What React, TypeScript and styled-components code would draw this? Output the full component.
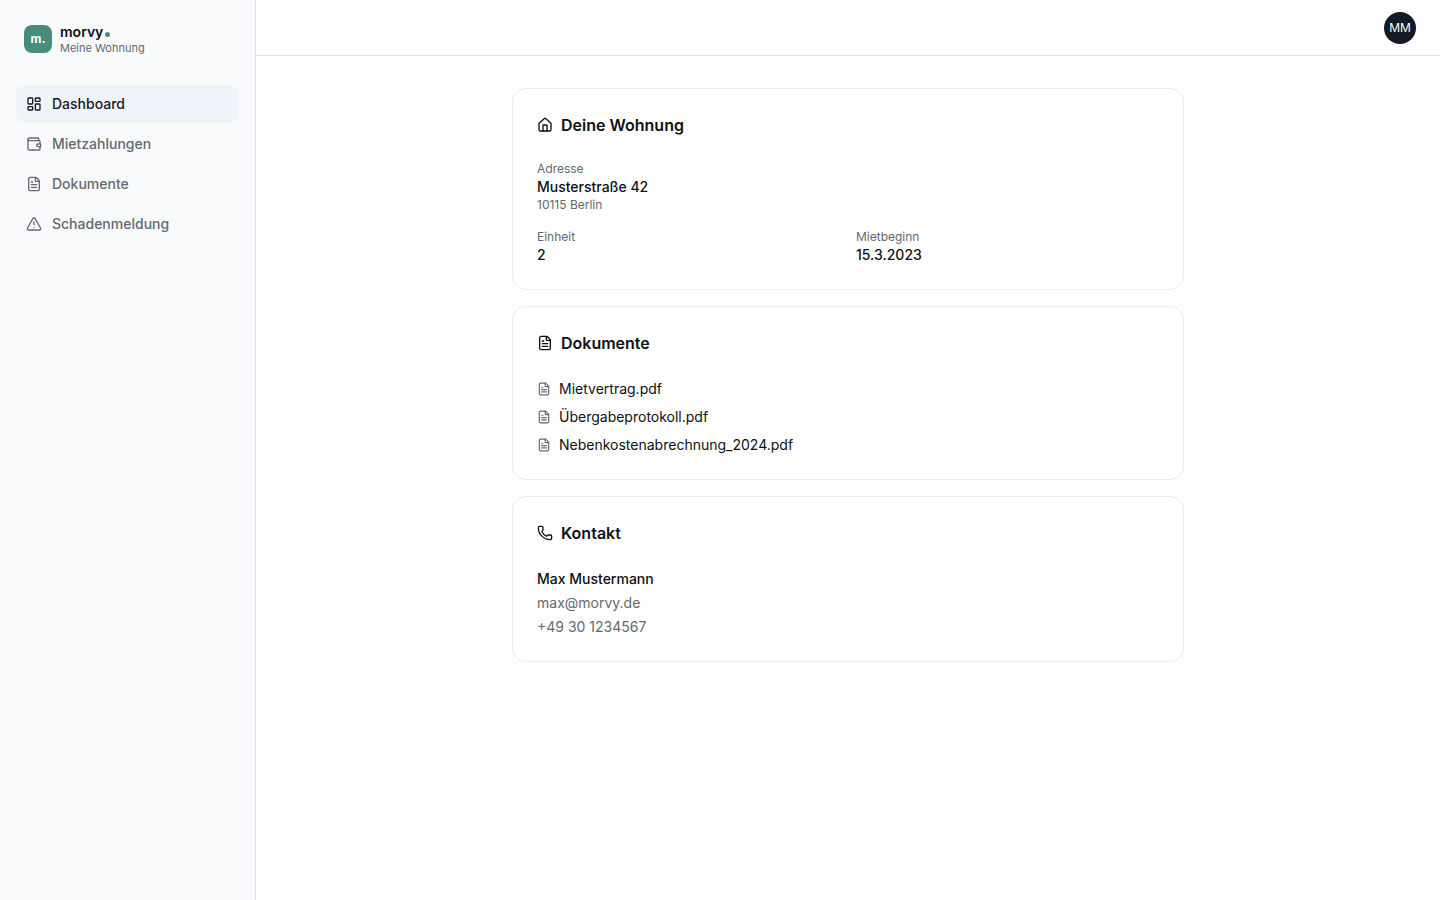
import React from "react";
import styled, { createGlobalStyle } from "styled-components";
import {
  FileText,
  House,
  LayoutDashboard,
  Phone,
  TriangleAlert,
  Wallet,
  type LucideIcon,
} from "lucide-react";

const colors = {
  page: "#fdfdfd",
  sidebar: "#f9fafc",
  active: "#f0f3f9",
  card: "#ffffff",
  line: "#e1e3e6",
  cardLine: "#ebecee",
  text: "#0d1015",
  navActive: "#141a24",
  muted: "#646972",
  brand: "#4a8c7c",
};

const GlobalStyle = createGlobalStyle`
  *, *::before, *::after { box-sizing: border-box; }
  body {
    margin: 0;
    background: ${colors.page};
    color: ${colors.text};
    font-family: Inter, "Liberation Sans", sans-serif;
    font-size: 14px;
    line-height: 20px;
    -webkit-font-smoothing: antialiased;
  }
  h1, h2, p, ul, dl, dd { margin: 0; padding: 0; }
  ul { list-style: none; }
  a { color: inherit; text-decoration: none; }
  button { font: inherit; border: 0; cursor: pointer; }
`;

const Shell = styled.div`
  display: flex;
  min-height: 100vh;
`;

const Sidebar = styled.aside`
  flex: 0 0 256px;
  background: ${colors.sidebar};
  border-right: 1px solid ${colors.line};
`;

const Brand = styled.a`
  display: flex;
  align-items: center;
  gap: 8px;
  height: 78px;
  padding: 0 24px;
`;

const BrandMark = styled.span`
  display: grid;
  place-items: center;
  width: 28px;
  height: 28px;
  border-radius: 8px;
  background: ${colors.brand};
  color: #ffffff;
  font-size: 12px;
  font-weight: 700;
`;

const BrandText = styled.span`
  display: flex;
  flex-direction: column;
`;

const BrandName = styled.span`
  display: flex;
  align-items: center;
  gap: 2px;
  font-weight: 600;
  line-height: 18px;
`;

const BrandDot = styled.span`
  width: 5px;
  height: 5px;
  margin-top: 4px;
  border-radius: 50%;
  background: ${colors.brand};
`;

const BrandSub = styled.span`
  color: ${colors.muted};
  font-size: 11px;
  line-height: 14px;
`;

const NavList = styled.ul`
  display: flex;
  flex-direction: column;
  gap: 4px;
  padding: 8px 16px;
`;

const NavLink = styled.a<{ $active?: boolean }>`
  display: flex;
  align-items: center;
  gap: 10px;
  height: 36px;
  padding: 0 10px;
  border-radius: 8px;
  background: ${(p) => (p.$active ? colors.active : "transparent")};
  color: ${(p) => (p.$active ? colors.navActive : colors.muted)};
  font-weight: 500;
`;

const Body = styled.div`
  flex: 1;
  min-width: 0;
`;

const TopBar = styled.header`
  display: flex;
  align-items: center;
  justify-content: flex-end;
  height: 56px;
  padding: 0 24px;
  border-bottom: 1px solid ${colors.line};
`;

const Avatar = styled.button`
  display: grid;
  place-items: center;
  width: 32px;
  height: 32px;
  padding: 0;
  border-radius: 50%;
  background: #141a24;
  color: #f9fafc;
  font-size: 12px;
`;

const Content = styled.main`
  display: flex;
  flex-direction: column;
  gap: 16px;
  max-width: 736px;
  margin: 0 auto;
  padding: 32px;
`;

const Card = styled.section`
  display: flex;
  flex-direction: column;
  gap: 24px;
  padding: 24px;
  border: 1px solid ${colors.cardLine};
  border-radius: 14px;
  background: ${colors.card};
`;

const CardTitle = styled.h2`
  display: flex;
  align-items: center;
  gap: 8px;
  font-size: 16px;
  font-weight: 600;
  line-height: 24px;
`;

const Facts = styled.dl`
  display: grid;
  grid-template-columns: 1fr 1fr;
  gap: 16px;
`;

const Fact = styled.div<{ $wide?: boolean }>`
  grid-column: ${(p) => (p.$wide ? "1 / -1" : "auto")};
`;

const Label = styled.dt`
  color: ${colors.muted};
  font-size: 12px;
  line-height: 16px;
`;

const Value = styled.dd`
  font-weight: 500;
`;

const SubValue = styled.dd`
  color: ${colors.muted};
  font-size: 12px;
  line-height: 16px;
`;

const FileList = styled.ul`
  display: flex;
  flex-direction: column;
  gap: 8px;
`;

const FileLink = styled.a`
  display: flex;
  align-items: center;
  gap: 8px;

  svg { color: ${colors.muted}; }
`;

const Contact = styled.address`
  display: flex;
  flex-direction: column;
  align-items: flex-start;
  gap: 4px;
  color: ${colors.muted};
  font-style: normal;
`;

const ContactName = styled.p`
  color: ${colors.text};
  font-weight: 500;
`;

const navItems: { label: string; icon: LucideIcon; active?: boolean }[] = [
  { label: "Dashboard", icon: LayoutDashboard, active: true },
  { label: "Mietzahlungen", icon: Wallet },
  { label: "Dokumente", icon: FileText },
  { label: "Schadenmeldung", icon: TriangleAlert },
];

const files = ["Mietvertrag.pdf", "Übergabeprotokoll.pdf", "Nebenkostenabrechnung_2024.pdf"];

export default function App() {
  return (
    <>
      <GlobalStyle />
      <Shell>
        <Sidebar>
          <Brand href="#">
            <BrandMark>m.</BrandMark>
            <BrandText>
              <BrandName>
                morvy
                <BrandDot />
              </BrandName>
              <BrandSub>Meine Wohnung</BrandSub>
            </BrandText>
          </Brand>
          <nav>
            <NavList>
              {navItems.map(({ label, icon: Icon, active }) => (
                <li key={label}>
                  <NavLink href="#" $active={active} aria-current={active ? "page" : undefined}>
                    <Icon size={16} />
                    {label}
                  </NavLink>
                </li>
              ))}
            </NavList>
          </nav>
        </Sidebar>
        <Body>
          <TopBar>
            <Avatar type="button">MM</Avatar>
          </TopBar>
          <Content>
            <Card>
              <CardTitle>
                <House size={16} />
                Deine Wohnung
              </CardTitle>
              <Facts>
                <Fact $wide>
                  <Label>Adresse</Label>
                  <Value>Musterstraße 42</Value>
                  <SubValue>10115 Berlin</SubValue>
                </Fact>
                <Fact>
                  <Label>Einheit</Label>
                  <Value>2</Value>
                </Fact>
                <Fact>
                  <Label>Mietbeginn</Label>
                  <Value>15.3.2023</Value>
                </Fact>
              </Facts>
            </Card>
            <Card>
              <CardTitle>
                <FileText size={16} />
                Dokumente
              </CardTitle>
              <FileList>
                {files.map((name) => (
                  <li key={name}>
                    <FileLink href="#">
                      <FileText size={14} />
                      {name}
                    </FileLink>
                  </li>
                ))}
              </FileList>
            </Card>
            <Card>
              <CardTitle>
                <Phone size={16} />
                Kontakt
              </CardTitle>
              <Contact>
                <ContactName>Max Mustermann</ContactName>
                <a href="mailto:max@morvy.de">max@morvy.de</a>
                <a href="tel:+49301234567">+49 30 1234567</a>
              </Contact>
            </Card>
          </Content>
        </Body>
      </Shell>
    </>
  );
}
